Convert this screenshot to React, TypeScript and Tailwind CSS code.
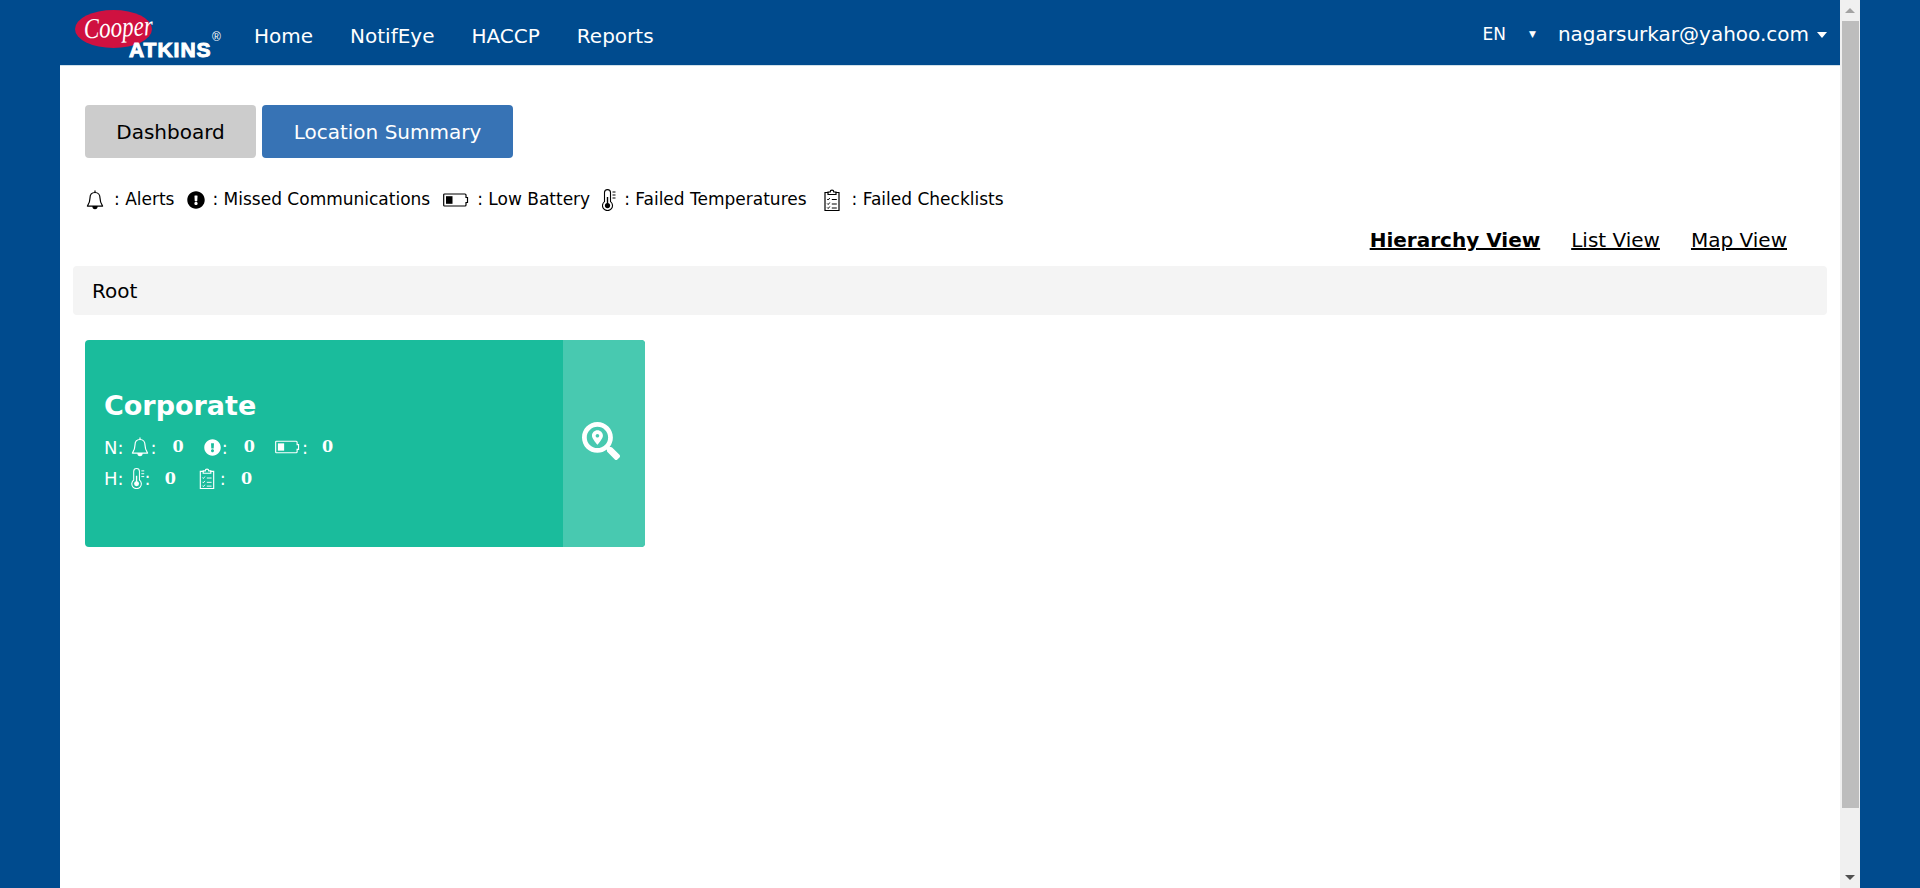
import { FaExclamationCircle, FaSearchLocation } from "react-icons/fa";

function BellIcon({ className }: { className?: string }) {
  return (
    <svg viewBox="0 0 18 20" className={className} fill="none" stroke="currentColor" strokeWidth="1.2">
      <path d="M9 2.5c-3.2 0-5 2.4-5 5.6 0 3.8-1 5.8-2.6 8h15.2c-1.6-2.2-2.6-4.2-2.6-8 0-3.2-1.8-5.6-5-5.6z" strokeLinejoin="round" />
      <path d="M9 .6v1.9" />
      <path d="M7 16.6a2 2 0 0 0 4 0z" fill="currentColor" />
    </svg>
  );
}

function BatteryIcon({ className }: { className?: string }) {
  return (
    <svg viewBox="0 0 26 14" className={className} fill="none" stroke="currentColor">
      <path d="M1.5 1h20.5a1 1 0 0 1 1 1v2.5h1.5v5H23V12a1 1 0 0 1-1 1H1.5a.8.8 0 0 1-.8-.8V1.8a.8.8 0 0 1 .8-.8z" strokeWidth="1.2" />
      <rect x="3" y="3.2" width="6.5" height="7.6" fill="currentColor" stroke="none" />
    </svg>
  );
}

function ThermoIcon({ className }: { className?: string }) {
  return (
    <svg viewBox="0 0 14 22" className={className} fill="none" stroke="currentColor">
      <path d="M2.5 12.6V3.6a3 3 0 0 1 6 0v9a5 5 0 1 1-6 0z" strokeWidth="1.1" />
      <circle cx="5.5" cy="16.6" r="2.6" fill="currentColor" stroke="none" />
      <path d="M5.5 8v7" strokeWidth="1.4" />
      <path d="M10.5 3h3M10.5 6h3M10.5 9h3" strokeWidth="1" />
    </svg>
  );
}

function ChecklistIcon({ className }: { className?: string }) {
  return (
    <svg viewBox="0 0 16 22" className={className} fill="none" stroke="currentColor" strokeWidth="1.2">
      <path d="M4.5 3.5H1v18h14v-18h-3.5" />
      <path d="M4 5.5V3h2.2a1.8 1.8 0 0 1 3.6 0H12v2.5z" />
      <path d="M3.2 10l1 1 1.6-2M3.2 14.5l1 1 1.6-2M3.2 18.5l1 1 1.6-2M7.8 10.5h5M7.8 15h5M7.8 19h5" strokeWidth="1" />
    </svg>
  );
}

function Logo() {
  return (
    <div className="relative w-[194px] h-[65px] shrink-0">
      <div className="absolute left-[15px] top-[10px] w-[77px] h-[38px] rounded-[50%] bg-[#cf1140]" />
      <span className="absolute left-[23px] top-[13px] text-white text-[23px] italic leading-[24px] origin-top scale-y-125 -rotate-3 font-['Liberation_Serif',serif]">Cooper</span>
      <span className="absolute left-[69px] top-[40px] text-white text-[21px] font-bold leading-[19px] tracking-[1px] [-webkit-text-stroke:1px_white] font-['Liberation_Sans',sans-serif]">ATKINS</span>
      <span className="absolute left-[152px] top-[31px] text-white text-[12px] leading-[12px] font-['Liberation_Sans',sans-serif]">®</span>
    </div>
  );
}

export default function App() {
  return (
    <div className="h-[888px] overflow-hidden bg-[#004b8e] flex justify-center font-['DejaVu_Sans',sans-serif]">
      <div className="w-[1780px] shrink-0 bg-white flex flex-col">

        {/* top nav */}
        <header className="h-[66px] bg-[#004b8e] border-b border-[#cfe0ea] flex items-center text-white">
          <Logo />
          <nav className="flex items-center gap-[37px] text-[20px] pt-[6px]">
            <a>Home</a>
            <a>NotifEye</a>
            <a>HACCP</a>
            <a>Reports</a>
          </nav>
          <div className="ml-auto flex items-center pr-[13px] pt-[3px]">
            <span className="text-[17px] mt-[1px]">EN</span>
            <span className="ml-[23px] text-[9px] leading-none">▼</span>
            <span className="ml-[22px] text-[20px]">nagarsurkar@yahoo.com</span>
            <span className="ml-[8px] mt-[1px] w-0 h-0 border-x-[5.5px] border-x-transparent border-t-[6px] border-t-white" />
          </div>
        </header>

        <div className="flex-1 px-[13px]">
          {/* tabs */}
          <div className="flex gap-[6px] pl-[12px] pt-[39px]">
            <button className="w-[171px] h-[53px] pt-[1px] rounded-[4px] bg-[#cccccc] text-black text-[20px]">Dashboard</button>
            <button className="w-[251px] h-[53px] pt-[1px] rounded-[4px] bg-[#3773b5] text-white text-[20px]">Location Summary</button>
          </div>

          {/* legend */}
          <div className="flex items-center h-[24px] mt-[30px] pl-[13px] text-[17px] text-black">
            <BellIcon className="w-[18px] h-[20px]" />
            <span className="ml-[10px]">: Alerts</span>
            <FaExclamationCircle className="ml-[13px] w-[18px] h-[18px]" />
            <span className="ml-[7px]">: Missed Communications</span>
            <BatteryIcon className="ml-[13px] w-[26px] h-[14px]" />
            <span className="ml-[8px]">: Low Battery</span>
            <ThermoIcon className="ml-[12px] w-[14px] h-[22px]" />
            <span className="ml-[8px]">: Failed Temperatures</span>
            <ChecklistIcon className="ml-[17px] w-[16px] h-[22px]" />
            <span className="ml-[12px]">: Failed Checklists</span>
          </div>

          {/* view switch */}
          <div className="flex justify-end gap-[31px] pr-[40px] mt-[15px] h-[26px] text-[20px] leading-[26px] text-black">
            <a className="font-bold underline">Hierarchy View</a>
            <a className="underline">List View</a>
            <a className="underline">Map View</a>
          </div>

          {/* breadcrumb */}
          <div className="h-[49px] mt-[13px] rounded-[4px] bg-[#f4f4f4] flex items-center pl-[19px] text-[20px] text-black">
            Root
          </div>

          {/* location card */}
          <div className="mt-[25px] ml-[12px] w-[560px] h-[207px] rounded-[4px] overflow-hidden flex text-white bg-[#1abc9c]">
            <div className="flex-1 pl-[19px] pt-[50px]">
              <h2 className="text-[27px] font-bold leading-[32px]">Corporate</h2>
              <div className="flex items-center h-[24px] mt-[13px] text-[18px]">
                <span>N:</span>
                <BellIcon className="ml-[7px] w-[18px] h-[20px]" />
                <span className="ml-[2px]">:</span>
                <b className="ml-[16px] font-['DejaVu_Serif',serif] text-[16px]">0</b>
                <FaExclamationCircle className="ml-[20px] w-[17px] h-[17px]" />
                <span className="ml-[1px]">:</span>
                <b className="ml-[16px] font-['DejaVu_Serif',serif] text-[16px]">0</b>
                <BatteryIcon className="ml-[20px] w-[25px] h-[14px]" />
                <span className="ml-[2px]">:</span>
                <b className="ml-[14px] font-['DejaVu_Serif',serif] text-[16px]">0</b>
              </div>
              <div className="flex items-center h-[24px] mt-[7px] text-[18px]">
                <span>H:</span>
                <ThermoIcon className="ml-[7px] w-[14px] h-[21px]" />
                <span>:</span>
                <b className="ml-[14px] mt-[2px] font-['DejaVu_Serif',serif] text-[16px]">0</b>
                <ChecklistIcon className="ml-[23px] w-[16px] h-[21px]" />
                <span className="ml-[5px]">:</span>
                <b className="ml-[15px] mt-[2px] font-['DejaVu_Serif',serif] text-[16px]">0</b>
              </div>
            </div>
            <div className="w-[82px] bg-[#48c9b0] flex items-center justify-center">
              <FaSearchLocation className="w-[38px] h-[38px] -mt-[5px] mr-[6px]" />
            </div>
          </div>
        </div>
      </div>

      {/* scrollbar of the inner frame */}
      <div className="w-[20px] shrink-0 h-full bg-[#f0f0f0] flex flex-col items-center">
        <div className="h-[21px] flex items-center justify-center">
          <span className="w-0 h-0 border-x-[5px] border-x-transparent border-b-[5px] border-b-[#a3a3a3]" />
        </div>
        <div className="w-[17px] h-[787px] bg-[#bdbdbd]" />
        <div className="flex-1 flex items-end pb-[8px]">
          <span className="w-0 h-0 border-x-[5px] border-x-transparent border-t-[5px] border-t-[#505050]" />
        </div>
      </div>
    </div>
  );
}
